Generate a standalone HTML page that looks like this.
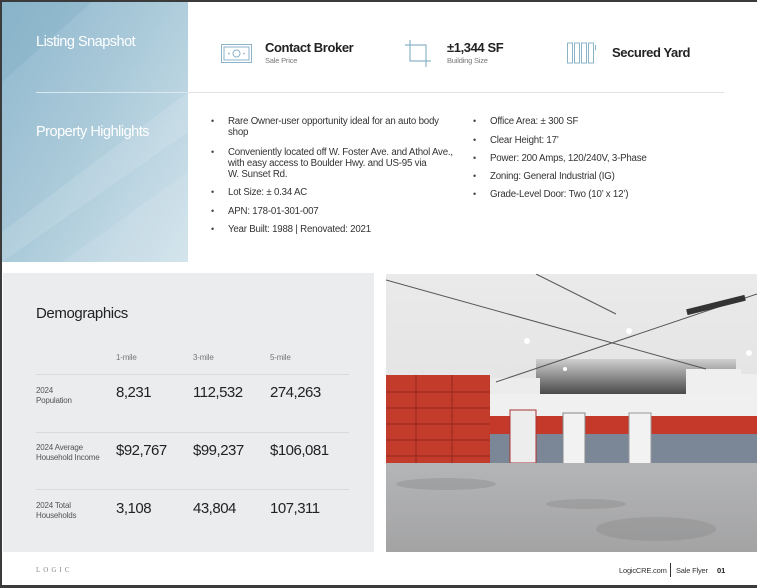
<!DOCTYPE html>
<html><head><meta charset="utf-8"><style>
*{margin:0;padding:0;box-sizing:border-box}
body{width:757px;height:588px;background:#3b3b3b;font-family:"Liberation Sans",sans-serif;overflow:hidden;position:relative}
.pg{position:absolute;left:2px;top:2px;width:755px;height:583px;background:#fff}
.a{position:absolute;white-space:nowrap}
.blue{position:absolute;left:2px;top:2px;width:186px;height:260px;background:linear-gradient(120deg,#8fb8cd 0%,#a9c9d9 45%,#c3dae5 80%,#cfe1ea 100%);overflow:hidden}
.h{color:#fff;font-size:14.5px;letter-spacing:-0.5px}
.b{font-size:9.7px;color:#333;letter-spacing:-0.2px;line-height:11px}
.dot{font-size:9px;color:#444}
.sv{font-size:13px;font-weight:bold;color:#222;letter-spacing:-0.4px}
.sl{font-size:7.5px;color:#777;letter-spacing:-0.2px}
.demo{position:absolute;left:3px;top:273px;width:371px;height:279px;background:#ebecee}
.lab{font-size:8px;color:#555;line-height:10px;letter-spacing:-0.2px}
.val{font-size:15px;color:#222;letter-spacing:-0.5px}
.hr{position:absolute;height:1px;background:#d8d9dc}
</style></head><body>
<div class="pg"></div>
<div class="blue">
<svg width="186" height="260" style="position:absolute;left:0;top:0">
<polygon points="0,230 186,90 186,130 0,260" fill="#ffffff" opacity="0.12"/>
<polygon points="60,260 186,170 186,260" fill="#ffffff" opacity="0.1"/>
<polygon points="0,0 90,0 0,80" fill="#7aa9c1" opacity="0.3"/>
</svg>
</div>
<div class="a h" style="left:36px;top:34px">Listing Snapshot</div>
<div class="a h" style="left:36px;top:124px">Property Highlights</div>
<div class="hr" style="left:36px;top:92px;width:152px;background:#dbe8ef"></div>
<div class="hr" style="left:188px;top:92px;width:536px;background:#e2e2e2"></div>

<svg class="a" style="left:221px;top:44px" width="31" height="19" viewBox="0 0 31 19"><rect x="0.5" y="0.5" width="30" height="18" fill="none" stroke="#8ab3c9"/><rect x="3" y="3" width="25" height="13" fill="none" stroke="#8ab3c9"/><ellipse cx="15.5" cy="9.5" rx="3.5" ry="3.5" fill="none" stroke="#8ab3c9"/><circle cx="8" cy="9.5" r="0.9" fill="#8ab3c9"/><circle cx="23" cy="9.5" r="0.9" fill="#8ab3c9"/></svg>
<div class="a sv" style="left:265px;top:40px">Contact Broker</div>
<div class="a sl" style="left:265px;top:56px">Sale Price</div>

<svg class="a" style="left:405px;top:40px" width="26" height="27" viewBox="0 0 26 27"><path d="M5 0V21H26M0 5H21V27" fill="none" stroke="#8ab3c9" stroke-width="1.2"/></svg>
<div class="a sv" style="left:447px;top:40px">±1,344 SF</div>
<div class="a sl" style="left:447px;top:56px">Building Size</div>

<svg class="a" style="left:567px;top:42px" width="30" height="22" viewBox="0 0 30 22"><g fill="none" stroke="#8ab3c9" stroke-width="1"><rect x="0.5" y="1" width="5" height="20"/><rect x="7.5" y="1" width="5" height="20"/><rect x="14.5" y="1" width="5" height="20"/><rect x="21.5" y="1" width="5" height="20"/><path d="M28.5 3v5"/></g></svg>
<div class="a sv" style="left:612px;top:45px">Secured Yard</div>

<div class="a dot" style="left:211px;top:116px">•</div>
<div class="a b" style="left:228px;top:116px">Rare Owner-user opportunity ideal for an auto body<br>shop</div>
<div class="a dot" style="left:211px;top:147px">•</div>
<div class="a b" style="left:228px;top:147px">Conveniently located off W. Foster Ave. and Athol Ave.,<br>with easy access to Boulder Hwy. and US-95 via<br>W. Sunset Rd.</div>
<div class="a dot" style="left:211px;top:187px">•</div>
<div class="a b" style="left:228px;top:187px">Lot Size: ± 0.34 AC</div>
<div class="a dot" style="left:211px;top:206px">•</div>
<div class="a b" style="left:228px;top:206px">APN: 178-01-301-007</div>
<div class="a dot" style="left:211px;top:224px">•</div>
<div class="a b" style="left:228px;top:224px">Year Built: 1988 | Renovated: 2021</div>

<div class="a dot" style="left:473px;top:116px">•</div>
<div class="a b" style="left:490px;top:116px">Office Area: ± 300 SF</div>
<div class="a dot" style="left:473px;top:135px">•</div>
<div class="a b" style="left:490px;top:135px">Clear Height: 17’</div>
<div class="a dot" style="left:473px;top:153px">•</div>
<div class="a b" style="left:490px;top:153px">Power: 200 Amps, 120/240V, 3-Phase</div>
<div class="a dot" style="left:473px;top:171px">•</div>
<div class="a b" style="left:490px;top:171px">Zoning: General Industrial (IG)</div>
<div class="a dot" style="left:473px;top:189px">•</div>
<div class="a b" style="left:490px;top:189px">Grade-Level Door: Two (10’ x 12’)</div>

<div class="demo"></div>
<div class="a" style="left:36px;top:305px;font-size:15px;color:#222;letter-spacing:-0.4px">Demographics</div>
<div class="a lab" style="left:116px;top:353px;color:#777">1-mile</div>
<div class="a lab" style="left:193px;top:353px;color:#777">3-mile</div>
<div class="a lab" style="left:270px;top:353px;color:#777">5-mile</div>
<div class="hr" style="left:36px;top:374px;width:313px"></div>
<div class="a lab" style="left:36px;top:386px">2024<br>Population</div>
<div class="a val" style="left:116px;top:384px">8,231</div>
<div class="a val" style="left:193px;top:384px">112,532</div>
<div class="a val" style="left:270px;top:384px">274,263</div>
<div class="hr" style="left:36px;top:432px;width:313px"></div>
<div class="a lab" style="left:36px;top:443px">2024 Average<br>Household Income</div>
<div class="a val" style="left:116px;top:442px">$92,767</div>
<div class="a val" style="left:193px;top:442px">$99,237</div>
<div class="a val" style="left:270px;top:442px">$106,081</div>
<div class="hr" style="left:36px;top:489px;width:313px"></div>
<div class="a lab" style="left:36px;top:501px">2024 Total<br>Households</div>
<div class="a val" style="left:116px;top:500px">3,108</div>
<div class="a val" style="left:193px;top:500px">43,804</div>
<div class="a val" style="left:270px;top:500px">107,311</div>

<svg class="a" style="left:386px;top:274px" width="371" height="278" viewBox="0 0 371 278">
<defs><linearGradient id="fl" x1="0" y1="0" x2="0" y2="1"><stop offset="0" stop-color="#b4b5b7"/><stop offset="1" stop-color="#a3a3a4"/></linearGradient>
<linearGradient id="cl" x1="0" y1="0" x2="0" y2="1"><stop offset="0" stop-color="#eaeaea"/><stop offset="1" stop-color="#dcdcdc"/></linearGradient>
<linearGradient id="dk" x1="0" y1="0" x2="0" y2="1"><stop offset="0" stop-color="#d0d0d0"/><stop offset="1" stop-color="#4a4a4a"/></linearGradient></defs>
<rect width="371" height="278" fill="url(#cl)"/>
<rect x="150" y="85" width="200" height="35" fill="url(#dk)"/>
<rect x="0" y="95" width="110" height="8" fill="#e6e6e6"/>
<rect x="104" y="104" width="50" height="90" fill="#ececec"/>
<rect x="350" y="100" width="21" height="94" fill="#efefef"/>
<rect x="82" y="120" width="289" height="24" fill="#f0f0f0"/>
<rect x="300" y="95" width="55" height="25" fill="#efefef"/>
<rect x="104" y="142" width="267" height="18" fill="#c4392a"/>
<rect x="104" y="160" width="267" height="30" fill="#7b8796"/>
<rect x="0" y="101" width="104" height="94" fill="#c33b2b"/>
<g stroke="#8f2a1f" stroke-width="1"><path d="M0 118H104M0 134H104M0 150H104M0 166H104M0 182H104M30 101V195M66 101V195"/></g>
<rect x="124" y="136" width="26" height="53" fill="#ededed" stroke="#a33" stroke-width="1"/>
<rect x="177" y="139" width="22" height="52" fill="#f2f2f2" stroke="#888"/>
<rect x="243" y="139" width="22" height="54" fill="#f2f2f2" stroke="#999"/>
<rect x="0" y="189" width="371" height="89" fill="url(#fl)"/>
<g stroke="#555" stroke-width="1" fill="none"><path d="M0 6L320 95"/><path d="M110 108L371 20"/><path d="M150 0L230 40"/></g>
<rect x="300" y="28" width="60" height="6" fill="#333" transform="rotate(-14 330 31)"/>
<g fill="#fff"><circle cx="141" cy="67" r="3"/><circle cx="243" cy="57" r="3"/><circle cx="363" cy="79" r="3"/><circle cx="179" cy="95" r="2"/></g>
<g fill="#8a8a8a" opacity="0.4"><ellipse cx="60" cy="210" rx="50" ry="6"/><ellipse cx="270" cy="255" rx="60" ry="12"/><ellipse cx="200" cy="230" rx="40" ry="5"/></g>
</svg>

<div class="a" style="left:36px;top:566px;font-family:'Liberation Serif',serif;font-size:7px;letter-spacing:3px;color:#888">LOGIC</div>
<div class="a" style="left:619px;top:566px;font-size:7.5px;color:#333;letter-spacing:-0.2px">LogicCRE.com</div>
<div class="a" style="left:670px;top:563px;width:1px;height:14px;background:#333"></div>
<div class="a" style="left:676px;top:566px;font-size:7.5px;color:#333;letter-spacing:-0.2px">Sale Flyer</div>
<div class="a" style="left:717px;top:566px;font-size:7.5px;color:#222;font-weight:bold">01</div>
</body></html>
